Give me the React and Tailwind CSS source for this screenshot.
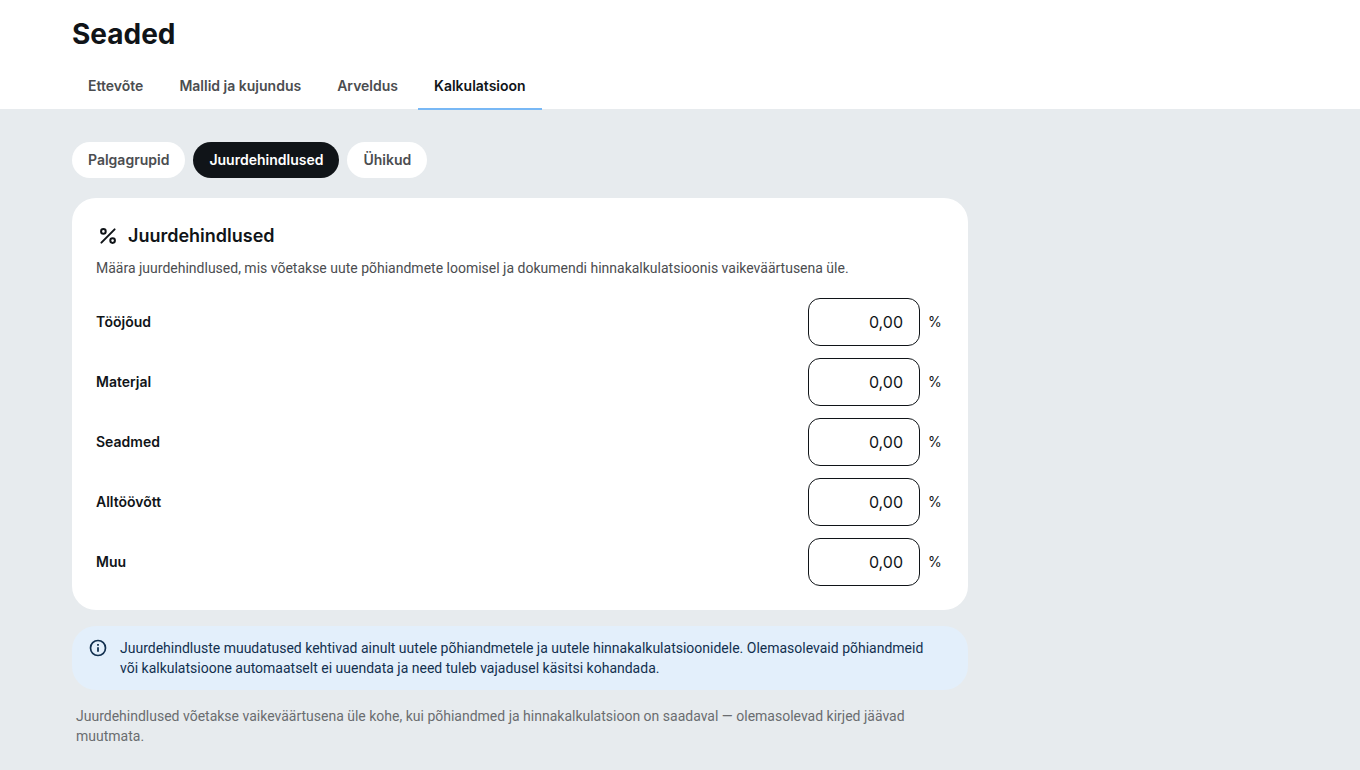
import { useState } from "react";

const TABS = ["Ettevõte", "Mallid ja kujundus", "Arveldus", "Kalkulatsioon"];
const SECTIONS = ["Palgagrupid", "Juurdehindlused", "Ühikud"];

const SURCHARGES = [
  { id: "labor", label: "Tööjõud" },
  { id: "material", label: "Materjal" },
  { id: "equipment", label: "Seadmed" },
  { id: "subcontract", label: "Alltöövõtt" },
  { id: "other", label: "Muu" },
];

function PercentIcon() {
  return (
    <svg viewBox="0 0 24 24" className="size-6 shrink-0" fill="none" stroke="currentColor" strokeWidth="2" aria-hidden="true">
      <circle cx="7.4" cy="7.4" r="2.3" />
      <circle cx="16.6" cy="16.6" r="2.3" />
      <path d="M5.4 18.6 18.6 5.4" strokeLinecap="round" />
    </svg>
  );
}

function InfoIcon() {
  return (
    <svg viewBox="0 0 20 20" className="size-5 shrink-0" fill="none" stroke="currentColor" aria-hidden="true">
      <circle cx="10" cy="10" r="7.5" strokeWidth="1.7" />
      <path d="M10 9.2v4.6" strokeWidth="1.8" />
      <path d="M10 6v1.8" strokeWidth="1.8" />
    </svg>
  );
}

function SurchargeRow({ id, label, value, onChange }) {
  return (
    <div className="flex items-center justify-between gap-4">
      <label htmlFor={id} className="text-sm font-semibold">
        {label}
      </label>
      <div className="flex items-center gap-2">
        <input
          id={id}
          type="text"
          inputMode="decimal"
          value={value}
          onChange={(e) => onChange(id, e.target.value)}
          className="h-12 w-28 rounded-xl border border-[#101418] bg-white px-4 text-right text-base"
        />
        <span className="w-4 text-sm">%</span>
      </div>
    </div>
  );
}

export default function App() {
  const [tab, setTab] = useState("Kalkulatsioon");
  const [section, setSection] = useState("Juurdehindlused");
  const [values, setValues] = useState(() =>
    Object.fromEntries(SURCHARGES.map((s) => [s.id, "0,00"]))
  );

  function handleChange(id, value) {
    setValues((prev) => ({ ...prev, [id]: value }));
  }

  return (
    <div className="min-h-screen bg-[#e7ebee] font-['Inter',sans-serif] text-[#101418]">
      <header className="border-b border-[#e7ebee] bg-white px-6 pt-4 md:px-18">
        <h1 className="text-[28px] leading-9 font-bold">Seaded</h1>
        <nav className="mt-3 -mb-px flex gap-1">
          {TABS.map((name) => (
            <button
              key={name}
              type="button"
              onClick={() => setTab(name)}
              className={
                tab === name
                  ? "border-b-2 border-[#78b8f5] px-4 py-3 text-sm font-semibold"
                  : "border-b-2 border-transparent px-4 py-3 text-sm font-semibold text-[#4b4d50]"
              }
            >
              {name}
            </button>
          ))}
        </nav>
      </header>

      <main className="px-6 pt-8 pb-6 md:px-18">
        <div className="mb-5 flex flex-wrap gap-2">
          {SECTIONS.map((name) => (
            <button
              key={name}
              type="button"
              onClick={() => setSection(name)}
              className={
                section === name
                  ? "rounded-full bg-[#101418] px-4 py-2 text-sm font-semibold text-white"
                  : "rounded-full bg-white px-4 py-2 text-sm font-semibold text-[#4b4d50]"
              }
            >
              {name}
            </button>
          ))}
        </div>

        <div className="flex max-w-4xl flex-col gap-4">
          <section className="rounded-3xl bg-white p-6">
            <div className="flex items-center gap-2">
              <PercentIcon />
              <h2 className="text-lg font-semibold">Juurdehindlused</h2>
            </div>
            <p className="mt-2 font-['Roboto',sans-serif] text-sm text-[#4b4d50]">
              Määra juurdehindlused, mis võetakse uute põhiandmete loomisel ja dokumendi
              hinnakalkulatsioonis vaikeväärtusena üle.
            </p>
            <div className="mt-5 flex flex-col gap-3">
              {SURCHARGES.map((s) => (
                <SurchargeRow
                  key={s.id}
                  id={s.id}
                  label={s.label}
                  value={values[s.id]}
                  onChange={handleChange}
                />
              ))}
            </div>
          </section>

          <div className="flex gap-3 rounded-3xl bg-[#e3effb] py-3 pr-8 pl-4 text-[#12304f]">
            <InfoIcon />
            <p className="font-['Roboto',sans-serif] text-sm">
              Juurdehindluste muudatused kehtivad ainult uutele põhiandmetele ja uutele
              hinnakalkulatsioonidele. Olemasolevaid põhiandmeid või kalkulatsioone
              automaatselt ei uuendata ja need tuleb vajadusel käsitsi kohandada.
            </p>
          </div>

          <p className="px-1 font-['Roboto',sans-serif] text-sm text-[#6a6d70]">
            Juurdehindlused võetakse vaikeväärtusena üle kohe, kui põhiandmed ja
            hinnakalkulatsioon on saadaval — olemasolevad kirjed jäävad muutmata.
          </p>
        </div>
      </main>
    </div>
  );
}
